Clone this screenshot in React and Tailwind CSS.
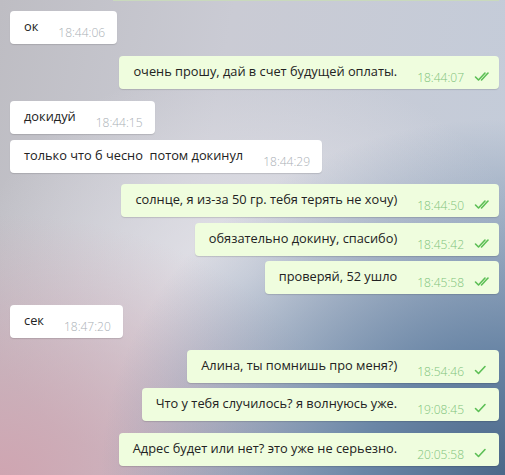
const messages = [
  { out: true, cut: true },
  { text: "ок", time: "18:44:06", mt: "mt-[10px]" },
  { out: true, text: "очень прошу, дай в счет будущей оплаты.", time: "18:44:07", read: true, mt: "mt-[12px]" },
  { text: "докидуй", time: "18:44:15", mt: "mt-[12px]" },
  { text: "только что б чесно  потом докинул", time: "18:44:29", mt: "mt-[6px]" },
  { out: true, text: "солнце, я из-за 50 гр. тебя терять не хочу)", time: "18:44:50", read: true, mt: "mt-[11px]" },
  { out: true, text: "обязательно докину, спасибо)", time: "18:45:42", read: true, mt: "mt-[6px]" },
  { out: true, text: "проверяй, 52 ушло", time: "18:45:58", read: true, mt: "mt-[5px]" },
  { text: "сек", time: "18:47:20", mt: "mt-[11px]" },
  { out: true, text: "Алина, ты помнишь про меня?)", time: "18:54:46", mt: "mt-[12px]" },
  { out: true, text: "Что у тебя случилось? я волнуюсь уже.", time: "19:08:45", mt: "mt-[5px]" },
  { out: true, text: "Адрес будет или нет? это уже не серьезно.", time: "20:05:58", mt: "mt-[12px]" },
]

function Check({ double }) {
  return (
    <svg width="18" height="11" viewBox="0 0 18 11" fill="none" stroke="#5cbf55" strokeWidth="1.6" strokeLinecap="round" strokeLinejoin="round">
      {double ? (
        <>
          <path d="M1.5 6 L4.5 9 L11 2" />
          <path d="M7.5 9 L14 2" />
        </>
      ) : (
        <path d="M1.5 5.5 L4.5 8.5 L11 1.5" />
      )}
    </svg>
  )
}

function Bubble({ m }) {
  if (m.cut) {
    return <div className="ml-auto mr-[6px] h-[1px] w-[386px] bg-[#c9d9bd]" />
  }
  return (
    <div className={`${m.mt} flex ${m.out ? "justify-end pr-[6px]" : "justify-start pl-[10px]"}`}>
      <div
        className={`flex h-[33px] items-start rounded-[4px] pt-[6px] pl-[14px] shadow-[0_1px_1px_rgba(0,0,0,0.13)] ${
          m.out ? "bg-[#effdde] pr-[7px]" : "bg-white pr-[12px]"
        }`}
      >
        <span className="whitespace-pre text-[12.8px] leading-[18px] text-[#222]">{m.text}</span>
        <span
          className={`ml-[20px] mt-[8px] text-[12px] font-light leading-[16px] ${
            m.out ? "text-[#80c37c]" : "text-[#aab0b6]"
          }`}
        >
          {m.time}
        </span>
        {m.out && (
          <span className="ml-[10px] mt-[9px] flex w-[18px]">
            <Check double={m.read} />
          </span>
        )}
      </div>
    </div>
  )
}

export default function App() {
  return (
    <div
      className="h-[475px] w-[505px] overflow-hidden bg-[radial-gradient(ellipse_80%_75%_at_100%_100%,#4b6889_0%,#6a86a6_35%,rgba(150,170,195,0)_100%),radial-gradient(ellipse_70%_55%_at_0%_100%,#cfa5b1_0%,rgba(215,185,195,0)_100%),radial-gradient(ellipse_55%_45%_at_50%_58%,#e4e3e9_0%,rgba(228,228,234,0)_100%),linear-gradient(100deg,#bebdc3_0%,#cacbd4_40%,#c3ccda_100%)]"
      style={{ fontFamily: '"Open Sans", "Noto Sans", sans-serif' }}
    >
      {messages.map((m, i) => (
        <Bubble key={i} m={m} />
      ))}
    </div>
  )
}
